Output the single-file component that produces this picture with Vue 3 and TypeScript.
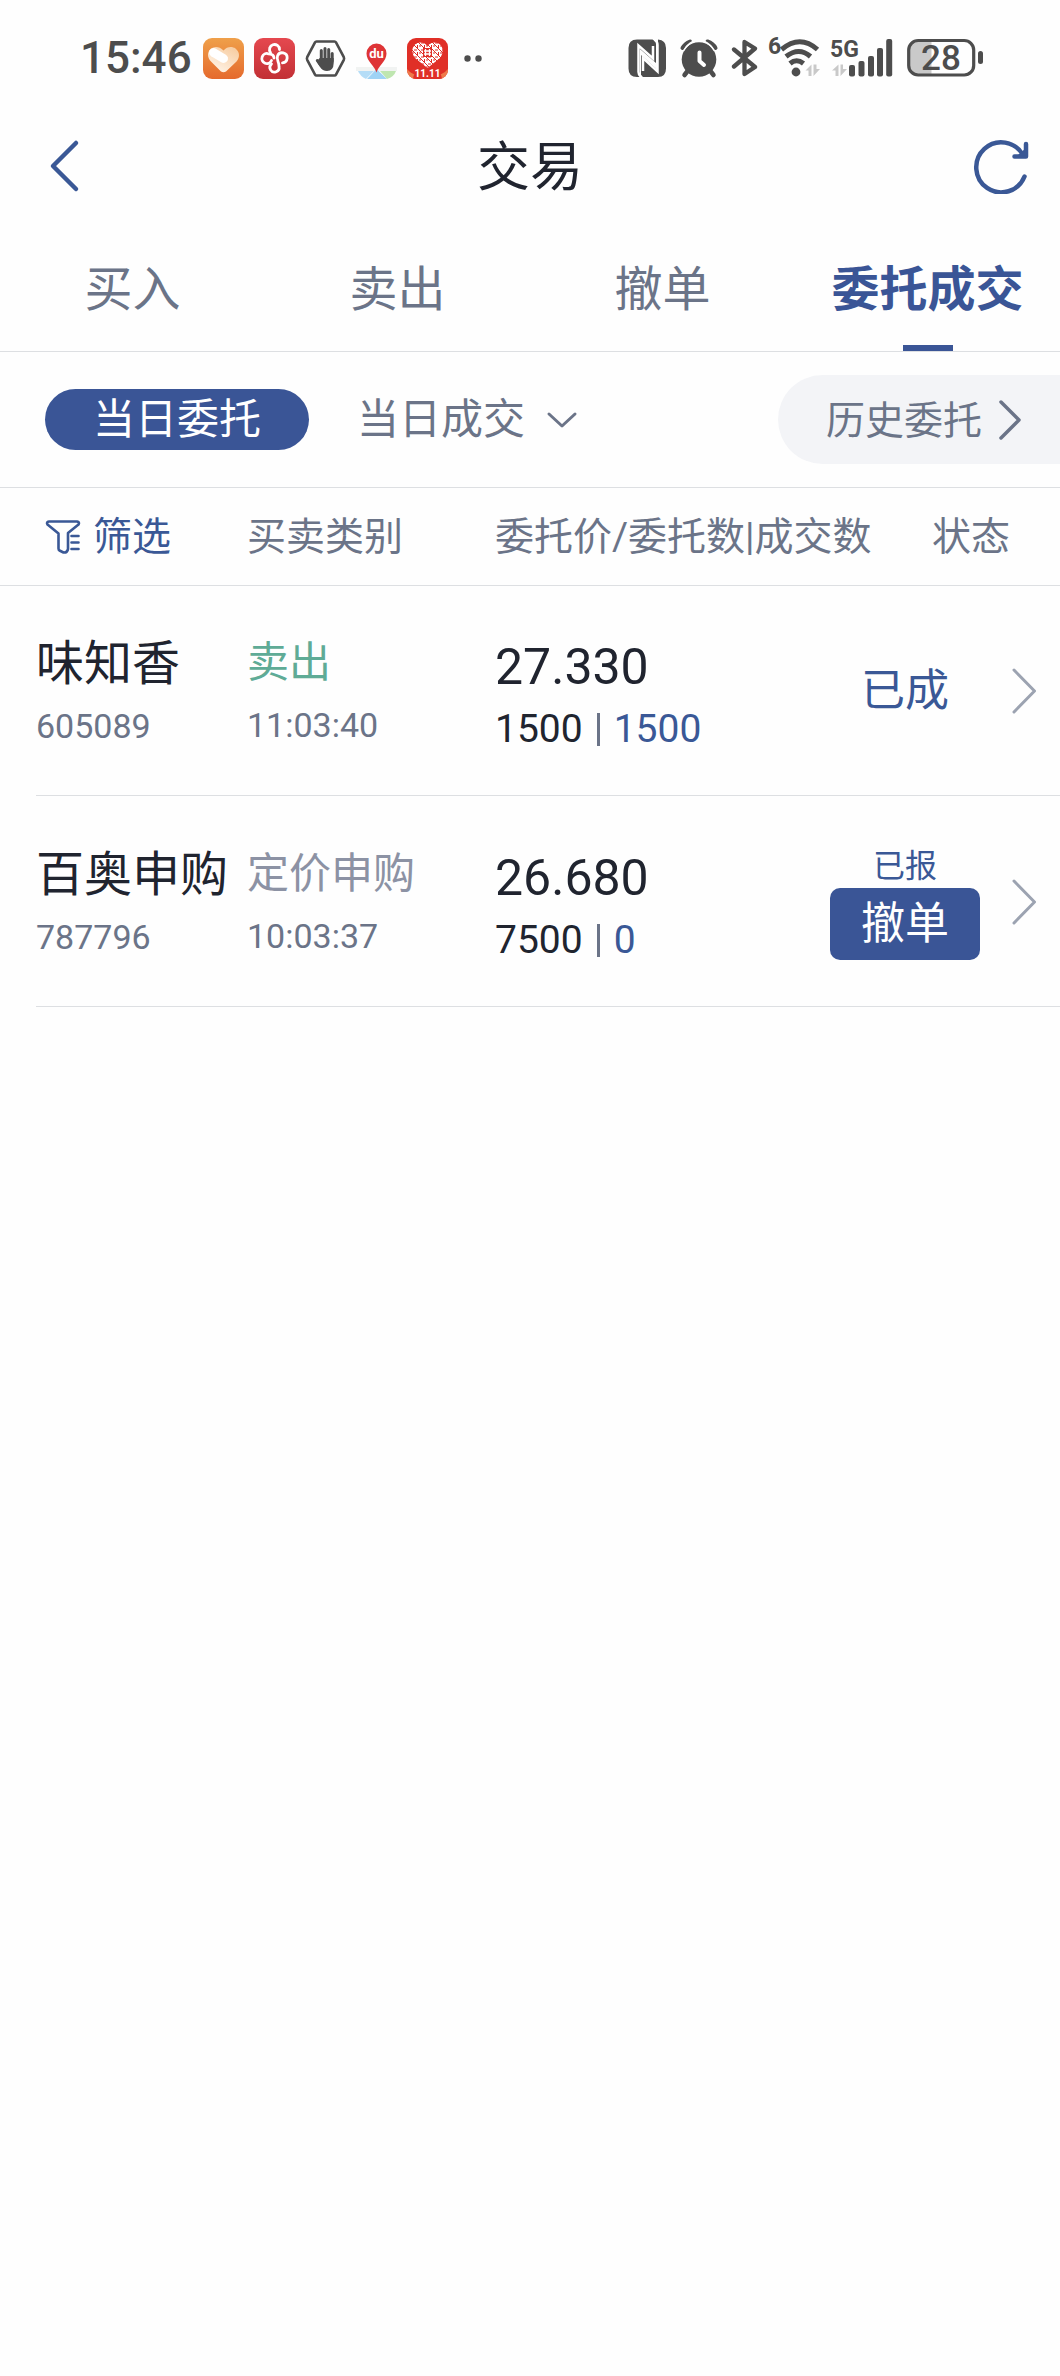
<script setup lang="ts">
import { ref } from 'vue'

interface Order {
  name: string
  code: string
  side: string
  sideClass: string
  time: string
  price: string
  amount: number
  filled: number
  status: string
  cancellable: boolean
}

const tabs: string[] = ['买入', '卖出', '撤单', '委托成交']
const activeTab = ref('委托成交')

const orders = ref<Order[]>([
  {
    name: '味知香',
    code: '605089',
    side: '卖出',
    sideClass: 'sell',
    time: '11:03:40',
    price: '27.330',
    amount: 1500,
    filled: 1500,
    status: '已成',
    cancellable: false,
  },
  {
    name: '百奥申购',
    code: '787796',
    side: '定价申购',
    sideClass: 'muted',
    time: '10:03:37',
    price: '26.680',
    amount: 7500,
    filled: 0,
    status: '已报',
    cancellable: true,
  },
])
</script>

<template>
  <div class="app">
    <div class="statusbar">
      <div class="status-left">
        <span class="clock">15:46</span>
        <svg width="41" height="41" viewBox="0 0 41 41" aria-hidden="true">
          <defs>
            <linearGradient id="orange" x1="0" y1="0" x2="0" y2="1">
              <stop offset="0" stop-color="#efa04a" />
              <stop offset="1" stop-color="#e56a2d" />
            </linearGradient>
            <linearGradient id="heart" x1="1" y1="0" x2="0.3" y2="1">
              <stop offset="0" stop-color="#f6c99b" />
              <stop offset="1" stop-color="#fff3e6" />
            </linearGradient>
          </defs>
          <rect width="41" height="41" rx="9" fill="url(#orange)" />
          <path d="M20.500 12.500C24 8.500 29 8 32.500 10.500C37 14 37 19.500 33.500 23.500L23 33.500Q20.500 35 18 33.500L8 23.500C4 19.500 4 14 8 10.500C12 8 16.500 8.500 20.500 12.500Z" fill="url(#heart)" />
          <path d="M10.500 14.500L20.500 20.500" stroke="#fff" stroke-width="9" stroke-linecap="round" />
        </svg>
        <svg width="41" height="41" viewBox="0 0 41 41" aria-hidden="true">
          <defs>
            <linearGradient id="red" x1="0" y1="0" x2="0" y2="1">
              <stop offset="0" stop-color="#e5484f" />
              <stop offset="1" stop-color="#c23035" />
            </linearGradient>
          </defs>
          <rect width="41" height="41" rx="9" fill="url(#red)" />
          <g fill="none" stroke="#fff" stroke-width="2.800" stroke-linecap="round">
            <path d="M16.500 14.500A5 5 0 1 1 25.500 11.500" />
            <path d="M17.500 22.500A5 5 0 1 1 14.500 15.800C18.500 16 20 17.500 20 20" />
            <path d="M28.500 24.800A5 5 0 1 0 23.500 18C22 22 25.500 24 25 28.500A4.600 4.600 0 1 1 17.500 26" />
          </g>
        </svg>
        <svg width="41" height="41" viewBox="0 0 41 41" aria-hidden="true">
          <path d="M11.500 3.500H29.500Q30.500 3.500 31 4.400L38.800 19.200Q39.400 20.500 38.800 21.800L31 36.600Q30.500 37.500 29.500 37.500H11.500Q10.500 37.500 10 36.600L2.200 21.800Q1.600 20.500 2.200 19.200L10 4.400Q10.500 3.500 11.500 3.500Z" fill="none" stroke="#4d4d4d" stroke-width="2.600" />
          <g stroke="#4d4d4d" stroke-width="3" stroke-linecap="round" fill="none">
            <path d="M16.300 22V12.500M20 21V10.500M23.700 21V11.500M27.200 23V15.500M12.300 22.500L15.500 27" />
          </g>
          <path d="M14.800 20H28.700V25Q28.500 33 22 33Q17.500 33 15 29L11.500 23.500Z" fill="#4d4d4d" />
        </svg>
        <svg width="41" height="41" viewBox="0 0 41 41" aria-hidden="true">
          <path d="M0 29H41V33H0Z" fill="#f1f3f2" />
          <path d="M2 33H18L10 41Q4 38 2 33Z" fill="#b5ddf7" />
          <path d="M20.500 31L31 41H11Z" fill="#9fd3f5" />
          <path d="M24 33H40Q38 39 31 41Z" fill="#bfe6b0" />
          <path d="M20.500 34.500C19 28 10.500 23.500 10.500 15.500A10 10 0 0 1 30.500 15.500C30.500 23.500 22 28 20.500 34.500Z" fill="#de3436" />
          <text x="20.500" y="20" text-anchor="middle" class="du">du</text>
        </svg>
        <svg width="41" height="41" viewBox="0 0 41 41" aria-hidden="true">
          <defs>
            <clipPath id="tile"><rect width="41" height="41" rx="9" /></clipPath>
            <pattern id="weave" width="7" height="7" patternUnits="userSpaceOnUse">
              <rect width="7" height="7" fill="#fff" />
              <path d="M0 0L7 7M3.500 0V3M0 5H3M5 1H7" stroke="#e02f27" stroke-width="1" />
            </pattern>
          </defs>
          <g clip-path="url(#tile)">
            <rect width="41" height="41" fill="#e02f27" />
            <path d="M0 31Q6 39 20 38Q35 39 41 31V41H0Z" fill="#ee7a4b" />
            <path d="M6 41Q7 30 20.500 30Q34 30 35 41Z" fill="#e02f27" />
            <path d="M20.500 8C24 3.500 30 3.500 33 6.500C37 10.500 36 16 33 20L20.500 30L8 20C5 16 4 10.500 8 6.500C11 3.500 17 3.500 20.500 8Z" fill="url(#weave)" />
            <rect x="16" y="10" width="9" height="9" fill="#e02f27" />
            <path d="M18.500 11V18M22.500 11V18M17 13H24M17 16H24" stroke="#fff" stroke-width="1.300" />
          </g>
          <text x="20.500" y="39" text-anchor="middle" class="eleven">11.11</text>
        </svg>
        <svg width="26" height="41" viewBox="0 0 26 41" aria-hidden="true">
          <circle cx="9.500" cy="20.500" r="3.200" fill="#4d4d4d" />
          <circle cx="20.500" cy="20.500" r="3.200" fill="#4d4d4d" />
        </svg>
      </div>
      <div class="status-right">
        <svg width="43" height="42" viewBox="627 37 43 42" aria-hidden="true">
          <path d="M637 39.500H652.500L656 42V63L640 49V77H637Q628.500 77 628.500 68.500V48Q628.500 39.500 637 39.500Z" fill="#4d4d4d" />
          <path d="M658 39.500Q666 40 666 48V68.500Q666 77 658 77H643L641 75V55L657 69.500Z" fill="#4d4d4d" />
          <path d="M654.500 39.500Q657.500 41.500 657.500 45V71.500L643 58V71" fill="none" stroke="#fff" stroke-width="2.500" />
          <path d="M641 77Q638.500 75 638.500 72V45.500L653 58.500V46" fill="none" stroke="#fff" stroke-width="2.500" />
        </svg>
        <svg width="42" height="42" viewBox="679 37 42 42" aria-hidden="true">
          <circle cx="699" cy="59.500" r="17.300" fill="#4d4d4d" />
          <path d="M682.500 48Q685 43.500 690 41.500M707.500 41.500Q713 43.500 715.500 48" fill="none" stroke="#4d4d4d" stroke-width="4" stroke-linecap="round" />
          <path d="M683.500 51Q687 44.500 693 41.500M704.500 41.500Q711 44.500 714.500 51" fill="none" stroke="#fefefe" stroke-width="1.500" />
          <path d="M688 70.500L684.500 75M710 70.500L713.500 75" stroke="#4d4d4d" stroke-width="4.500" stroke-linecap="round" />
          <path d="M699.500 52.500V61L704 65" fill="none" stroke="#fff" stroke-width="4" stroke-linecap="round" stroke-linejoin="round" />
        </svg>
        <svg width="28" height="42" viewBox="730 37 28 42" aria-hidden="true">
          <path d="M734 49.500L755 67L744.500 74V42L755 48.500L734 66.500" fill="none" stroke="#4d4d4d" stroke-width="4.300" stroke-linecap="round" stroke-linejoin="round" />
        </svg>
        <svg width="53" height="62" viewBox="767 27 53 62" aria-hidden="true">
          <text x="768" y="54" class="net">6</text>
          <g fill="none" stroke="#4d4d4d" stroke-width="5">
            <path d="M781.500 49.500Q800 34 817.500 49.500" />
            <path d="M786 56.500Q799 46.500 810.500 56.500" />
            <path d="M790 63.500Q796.500 58 803.500 63.500" />
          </g>
          <circle cx="796" cy="72" r="4.400" fill="#4d4d4d" />
          <path d="M805.500 70.500L811.500 64.500V76H808.500V70.500ZM813.500 64.500H816.500V69H820L813.500 76Z" fill="#c9c9c9" />
        </svg>
        <svg width="65" height="62" viewBox="829 27 65 62" aria-hidden="true">
          <text x="830" y="57" class="net">5G</text>
          <path d="M832 70.500L838.500 64.500V76H835.500V70.500ZM840.500 64.500H843V69H847L840.500 76Z" fill="#c9c9c9" />
          <g fill="#4d4d4d">
            <rect x="849" y="65" width="6" height="11.500" rx="2" />
            <rect x="858.500" y="61" width="6" height="15.500" rx="2" />
            <rect x="868" y="56" width="6" height="20.500" rx="2" />
            <rect x="877" y="48" width="6" height="28.500" rx="2" />
            <rect x="886.200" y="39" width="6" height="37.500" rx="2" />
          </g>
        </svg>
        <svg width="80" height="42" viewBox="903 37 80 42" aria-hidden="true">
          <path d="M931.500 41H919Q909 41 909 51V65Q909 75 919 75H931.500Z" fill="#c9c9c9" />
          <rect x="908.700" y="40.500" width="65" height="34.500" rx="9.500" fill="none" stroke="#4d4d4d" stroke-width="3.200" />
          <rect x="978" y="51" width="5" height="13" rx="2.500" fill="#4d4d4d" />
          <text x="941" y="70" text-anchor="middle" class="battery">28</text>
        </svg>
      </div>
    </div>

    <header class="nav">
      <button type="button" class="icon-button back" aria-label="返回">
        <svg width="32" height="54" viewBox="0 0 32 54" aria-hidden="true">
          <path d="M27 4L4 27L27 50" fill="none" stroke="#3a5896" stroke-width="4.500" stroke-linecap="round" stroke-linejoin="round" />
        </svg>
      </button>
      <h1>交易</h1>
      <button type="button" class="icon-button refresh" aria-label="刷新">
        <svg width="56" height="56" viewBox="0 0 56 56" aria-hidden="true">
          <path d="M51.500 38.500A25 25 0 1 1 50 17" fill="none" stroke="#3a5896" stroke-width="4.500" stroke-linecap="round" />
          <path d="M53 6V18.500H41.500" fill="none" stroke="#3a5896" stroke-width="4.500" stroke-linecap="round" stroke-linejoin="round" />
          <path d="M53 18V10L45 17Z" fill="#3a5896" />
        </svg>
      </button>
    </header>

    <nav class="tabs">
      <button
        v-for="tab in tabs"
        :key="tab"
        type="button"
        class="tab"
        :class="{ active: tab === activeTab }"
        @click="activeTab = tab"
      >
        {{ tab }}
      </button>
    </nav>

    <div class="filters">
      <button type="button" class="pill">当日委托</button>
      <button type="button" class="today">
        当日成交
        <svg width="34" height="20" viewBox="0 0 34 20" aria-hidden="true">
          <path d="M4 4L17 16L30 4" fill="none" stroke="#6b7488" stroke-width="3" stroke-linecap="round" stroke-linejoin="round" />
        </svg>
      </button>
      <a href="#" class="history">
        <span>历史委托</span>
        <svg width="24" height="42" viewBox="0 0 24 42" aria-hidden="true">
          <path d="M3 3L21 21L3 39" fill="none" stroke="#6b7488" stroke-width="3.500" stroke-linecap="round" stroke-linejoin="round" />
        </svg>
      </a>
    </div>

    <table class="orders">
      <colgroup>
        <col class="col-name" />
        <col class="col-side" />
        <col />
        <col class="col-status" />
        <col class="col-arrow" />
      </colgroup>
      <thead>
        <tr>
          <th scope="col" class="name-head">
            <button type="button" class="filter">
              <svg width="36" height="36" viewBox="0 0 36 36" aria-hidden="true">
                <g fill="none" stroke="#3a5896" stroke-width="2.600" stroke-linecap="round" stroke-linejoin="round">
                  <path d="M4 2.500H32Q35 3 33.500 5.500L23 14V30Q22.500 34 18.500 33.500L14.500 31.500Q13.500 31 13.500 29.500V14.500L2.500 5.500Q1 3 4 2.500Z" />
                  <path d="M26.500 17H33.500M26.500 23.500H33.500M26.500 30H33.500" />
                </g>
              </svg>
              筛选
            </button>
          </th>
          <th scope="col">买卖类别</th>
          <th scope="col">委托价/委托数|成交数</th>
          <th scope="col" colspan="2" class="status-head">状态</th>
        </tr>
      </thead>
      <tbody>
        <tr v-for="order in orders" :key="order.code">
          <td class="name-cell">
            <div class="name">{{ order.name }}</div>
            <div class="small">{{ order.code }}</div>
          </td>
          <td class="side-cell">
            <div class="side" :class="order.sideClass">{{ order.side }}</div>
            <div class="small">{{ order.time }}</div>
          </td>
          <td class="price-cell">
            <div class="price">{{ order.price }}</div>
            <div class="quantity">
              <span>{{ order.amount }}</span>
              <i class="divider"></i>
              <span class="filled">{{ order.filled }}</span>
            </div>
          </td>
          <td class="status-cell">
            <template v-if="order.cancellable">
              <div class="reported">{{ order.status }}</div>
              <button type="button" class="cancel">撤单</button>
            </template>
            <div v-else class="done">{{ order.status }}</div>
          </td>
          <td class="arrow-cell">
            <svg width="26" height="46" viewBox="0 0 26 46" aria-hidden="true">
              <path d="M3 2L23.500 23L3 44" fill="none" stroke="#9ca3b1" stroke-width="3" stroke-linecap="round" stroke-linejoin="round" />
            </svg>
          </td>
        </tr>
      </tbody>
    </table>
  </div>
</template>

<style>
body {
  background: #fefefe;
}
</style>

<style scoped>
.app {
  font-family: Roboto, "Noto Sans CJK SC", sans-serif;
  color: #20242f;
  background: #fefefe;
}

button {
  padding: 0;
  border: 0;
  background: none;
  font: inherit;
  color: inherit;
  white-space: nowrap;
}

svg {
  display: block;
  flex: none;
}

.statusbar {
  display: flex;
  justify-content: space-between;
  align-items: center;
  height: 116px;
  padding: 0 77px 0 80px;
}

.status-left {
  display: flex;
  align-items: center;
  gap: 10px;
}

.clock {
  width: 113px;
  font-size: 44px;
  font-weight: 500;
  color: #4d4d4d;
}

.status-right {
  display: flex;
  align-items: center;
  gap: 9px;
}

.du {
  font-size: 13px;
  font-weight: 700;
  fill: #fff;
}

.eleven {
  font-size: 10px;
  font-weight: 700;
  fill: #fff;
}

.net {
  font-size: 23px;
  font-weight: 700;
  fill: #4d4d4d;
}

.battery {
  font-size: 35px;
  font-weight: 500;
  fill: #4d4d4d;
}

.nav {
  display: grid;
  grid-template-columns: 1fr auto 1fr;
  align-items: center;
  height: 100px;
  padding: 0 31px;
}

.icon-button {
  display: flex;
  width: 56px;
}

.back {
  padding-left: 18px;
}

.refresh {
  justify-self: end;
}

h1 {
  margin: 0;
  padding-top: 4px;
  font-size: 53px;
  line-height: 76px;
  font-weight: 400;
}

.tabs {
  display: grid;
  grid-template-columns: repeat(4, 1fr);
  height: 135px;
  border-bottom: 1px solid #dddfe2;
}

.tab {
  position: relative;
  padding-top: 12px;
  font-size: 48px;
  line-height: 72px;
  color: #6b7488;
}

.tab.active {
  font-weight: 700;
  color: #3a5596;
}

.tab.active::after {
  content: "";
  position: absolute;
  bottom: 0;
  left: 50%;
  width: 50px;
  height: 6px;
  margin-left: -25px;
  background: #3a5596;
}

.filters {
  display: flex;
  align-items: center;
  height: 135px;
  padding-left: 45px;
  border-bottom: 1px solid #dddfe2;
}

.pill {
  width: 264px;
  height: 61px;
  border-radius: 31px;
  background: #3a5596;
  color: #fff;
  font-size: 42px;
  line-height: 61px;
}

.today {
  display: flex;
  align-items: center;
  gap: 20px;
  margin-left: 48px;
  color: #6b7488;
  font-size: 42px;
  line-height: 61px;
}

.history {
  display: flex;
  align-items: center;
  gap: 16px;
  height: 89px;
  margin-left: auto;
  padding: 0 38px 0 48px;
  border-radius: 45px 0 0 45px;
  background: #f3f4f7;
  color: #6b7488;
  font-size: 39px;
  line-height: 61px;
  text-decoration: none;
}

.history span {
  padding-top: 4px;
}

.orders {
  width: 100%;
  table-layout: fixed;
  border-collapse: collapse;
}

.col-name {
  width: 247px;
}

.col-side {
  width: 248px;
}

.col-status {
  width: 150px;
}

.col-arrow {
  width: 80px;
}

th,
td {
  box-sizing: border-box;
  padding: 0;
  text-align: left;
  white-space: nowrap;
}

th {
  height: 97px;
  padding-top: 2px;
  border-bottom: 1px solid #dddfe2;
  color: #6b7488;
  font-size: 39px;
  font-weight: 400;
  line-height: 60px;
}

.name-head {
  padding-left: 45px;
}

.filter {
  display: flex;
  align-items: center;
  gap: 12px;
  color: #3a5896;
}

.status-head {
  padding-right: 50px;
  text-align: right;
}

tbody tr {
  background: linear-gradient(#dddfe2, #dddfe2) right bottom / calc(100% - 36px) 1px no-repeat;
}

td {
  height: 211px;
}

.name-cell {
  padding: 7px 0 0 36px;
}

.side-cell {
  padding-top: 5px;
}

.price-cell {
  padding-top: 13px;
}

.name,
.side,
.price {
  line-height: 64px;
}

.name {
  font-size: 48px;
}

.side {
  font-size: 42px;
}

.side.sell {
  color: #5fab96;
}

.side.muted {
  color: #8c92a4;
}

.small {
  color: #6b7488;
  font-size: 34px;
  line-height: 60px;
}

.price {
  font-size: 50px;
}

.quantity {
  display: flex;
  align-items: center;
  gap: 14px;
  font-size: 39px;
  line-height: 60px;
}

.divider {
  width: 3px;
  height: 33px;
  background: #6b7488;
}

.filled {
  color: #3a5896;
}

.status-cell {
  text-align: center;
  color: #3a5896;
}

.done {
  font-size: 44px;
  line-height: 60px;
}

.reported {
  font-size: 32px;
  line-height: 44px;
}

.cancel {
  display: block;
  width: 100%;
  height: 72px;
  border-radius: 10px;
  background: #3a5596;
  color: #fff;
  font-size: 44px;
  line-height: 72px;
}

.arrow-cell {
  padding-left: 31px;
}
</style>
